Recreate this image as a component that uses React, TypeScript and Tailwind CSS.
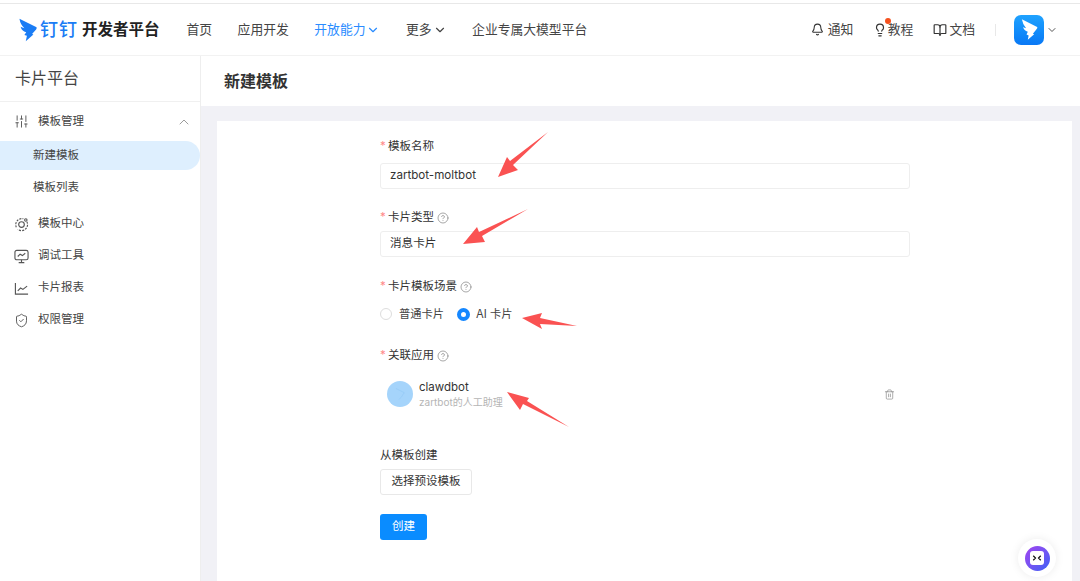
import { Bell, ChevronDown, ChevronUp, CircleHelp, Lightbulb, BookOpen, SlidersVertical, ShieldCheck, Trash2 } from 'lucide-react';

const FONT = 'font-["Inter","Noto_Sans_CJK_SC",sans-serif]';

function DingLogo({ className }: { className?: string }) {
  return (
    <svg viewBox="0 0 20 26" className={className} fill="#1a7cf5">
      <path d="M0.5 0.5 L19.5 10 Q20 11 19 12.5 L14.5 17.5 L16 18 L7.5 25.5 L8.8 19.5 L6 18.5 L8 15.5 Q3 14.5 1.8 9.5 Q3.5 10.5 6 11 Q1.5 7 0.5 0.5 Z" />
    </svg>
  );
}

function Label({ text, help, required = true }: { text: string; help?: boolean; required?: boolean }) {
  return (
    <div className="flex h-[20px] items-center text-[11.5px] text-[#333]">
      {required && <span className="w-[8px] text-[#ff8a8a]">*</span>}
      <span>{text}</span>
      {help && <CircleHelp className="ml-[3px] h-[12px] w-[12px] text-[#8a8a8a]" strokeWidth={1.5} />}
    </div>
  );
}

function NavIcon({ children, label }: { children: React.ReactNode; label: string }) {
  return (
    <div className="flex h-[32px] items-center pl-[14px] text-[11.5px] text-[#444]">
      <span className="flex w-[24px] text-[#555]">{children}</span>
      {label}
    </div>
  );
}

export default function App() {
  return (
    <div className={`relative h-[581px] w-[1080px] overflow-hidden bg-white ${FONT}`}>
      <div className="h-[4px] border-b border-[#e8e8e8]" />

      {/* top bar */}
      <header className="flex h-[52px] items-center border-b border-[#f2f2f2] pl-[19px] pr-[22px]">
        <DingLogo className="h-[26px] w-[18px]" />
        <span className="ml-[3px] text-[18px] font-medium leading-none tracking-[1px] text-[#1a7cf5]">钉钉</span>
        <span className="ml-[4px] text-[15.5px] font-bold text-[#222]">开发者平台</span>
        <nav className="ml-[27px] flex items-center gap-[25.5px] text-[12.8px] text-[#444]">
          <span>首页</span>
          <span>应用开发</span>
          <span className="flex items-center text-[#2a8cff]">
            开放能力<ChevronDown className="ml-[1px] h-[14px] w-[14px]" />
          </span>
          <span className="flex items-center">
            更多<ChevronDown className="ml-[1px] h-[14px] w-[14px]" />
          </span>
          <span>企业专属大模型平台</span>
        </nav>
        <div className="ml-auto flex items-center text-[12.8px] text-[#444]">
          <span className="flex items-center gap-[4px]">
            <Bell className="h-[13px] w-[13px] text-[#333]" />通知
          </span>
          <span className="relative ml-[19.5px] flex items-center gap-[1px]">
            <Lightbulb className="h-[14px] w-[14px] text-[#333]" />教程
            <span className="absolute left-[12px] top-[-2px] h-[6px] w-[6px] rounded-full bg-[#f5511e]" />
          </span>
          <span className="ml-[20px] flex items-center gap-[2px]">
            <BookOpen className="h-[14px] w-[14px] text-[#333]" />文档
          </span>
          <span className="ml-[20px] h-[12px] w-px bg-[#e8e8e8]" />
          <span className="ml-[18px] flex h-[30px] w-[30px] items-center justify-center rounded-[7px] bg-gradient-to-b from-[#1fa2ff] to-[#0a78f5]">
            <svg viewBox="0 0 20 26" className="h-[23px] w-[17px]" fill="#fff">
              <path d="M1 1 L19 10 Q20 11 18 13 L14 18 L15.5 18.5 L8 25 L9 20 L6.5 19 L8 15.5 Q3.5 14.5 2.5 10 Q4 11 6 11.5 Q2 7 1 1 Z" />
            </svg>
          </span>
          <ChevronDown className="ml-[2px] h-[12px] w-[12px] text-[#555]" />
        </div>
      </header>

      <div className="flex h-[525px]">
        {/* sidebar */}
        <aside className="w-[201px] shrink-0 border-r border-[#eeeeee]">
          <div className="flex h-[46px] items-center border-b border-[#f0f0f0] pb-[1px] pl-[15px] text-[16px] text-[#444]">卡片平台</div>
          <div className="flex h-[39px] items-center pl-[14px] pr-[8px] text-[11.5px] text-[#444]">
            <SlidersVertical className="mr-[9px] h-[15px] w-[15px] text-[#555]" strokeWidth={1.5} />
            模板管理
            <ChevronUp className="ml-auto h-[16px] w-[16px] text-[#888]" strokeWidth={1.25} />
          </div>
          <div className="flex h-[29px] items-center rounded-r-[15px] bg-[#deeffe] pl-[33px] text-[11.5px] text-[#444]">新建模板</div>
          <div className="flex h-[36px] items-center pl-[33px] text-[11.5px] text-[#444]">模板列表</div>
          <div className="mt-[2px]">
            <NavIcon label="模板中心">
              <svg viewBox="0 0 16 16" className="h-[15px] w-[15px]" fill="none" stroke="currentColor" strokeWidth="1.2">
                <circle cx="8" cy="8" r="3" />
                <path d="M2.5 11 A6.5 6.5 0 0 1 10 1.9" strokeDasharray="2.2 1.2" />
                <path d="M13.7 5 A6.5 6.5 0 0 1 4 13.2" strokeDasharray="2.2 1.2" />
                <circle cx="12.6" cy="3.2" r="1.3" />
              </svg>
            </NavIcon>
            <NavIcon label="调试工具">
              <svg viewBox="0 0 16 16" className="h-[15px] w-[15px]" fill="none" stroke="currentColor" strokeWidth="1.2">
                <rect x="1" y="1.5" width="14" height="10" rx="2" />
                <path d="M4 8 L6.5 5.5 L9 7 L12 4.5" />
                <path d="M8 11.5 V14.5 M5 14.5 H11" />
              </svg>
            </NavIcon>
            <NavIcon label="卡片报表">
              <svg viewBox="0 0 16 16" className="h-[15px] w-[15px]" fill="none" stroke="currentColor" strokeWidth="1.2">
                <path d="M1.5 2 V14 H15" />
                <path d="M4 10.5 L7 7.5 L9.5 9 L14 5.5" />
              </svg>
            </NavIcon>
            <NavIcon label="权限管理"><ShieldCheck className="h-[15px] w-[15px]" strokeWidth={1.5} /></NavIcon>
          </div>
        </aside>

        {/* main */}
        <main className="flex min-w-0 flex-1 flex-col bg-[#f1f1f6]">
          <div className="flex h-[50px] shrink-0 items-center bg-white pl-[23px] text-[16px] font-bold text-[#333]">新建模板</div>
          <div className="ml-[16px] mr-[8px] mt-[15px] flex-1 bg-white pl-[163px] pt-[16px]">
            <div className="w-[530px]">
              <Label text="模板名称" />
              <div className="mt-[6px] flex h-[26px] items-center rounded-[3px] border border-[#eeeeee] pl-[9px] text-[11.6px] text-[#333]">zartbot-moltbot</div>
              <div className="mt-[19px]"><Label text="卡片类型" help /></div>
              <div className="mt-[3px] flex h-[26px] items-center rounded-[3px] border border-[#eeeeee] pl-[9px] text-[11.6px] text-[#333]">消息卡片</div>
              <div className="mt-[20px]"><Label text="卡片模板场景" help /></div>
              <div className="mt-[7px] flex h-[20px] items-center text-[11.25px] text-[#444]">
                <span className="h-[12px] w-[12px] rounded-full border border-[#dddddd]" />
                <span className="ml-[7px]">普通卡片</span>
                <span className="ml-[13px] h-[13px] w-[13px] rounded-full border-[4px] border-[#1587ff] bg-white" />
                <span className="ml-[6px]">AI 卡片</span>
              </div>
              <div className="mt-[22px]"><Label text="关联应用" help /></div>
              <div className="mt-[5px] flex h-[46px] items-center pl-[7px] pr-[15px]">
                <span className="flex h-[26px] w-[26px] items-center justify-center rounded-full bg-[#a5d4fb]">
                  <svg viewBox="0 0 20 26" className="h-[12px] w-[10px]" fill="none" stroke="#8cc4f5">
                    <path d="M1 1 L19 10 L14 18 L8 25" />
                  </svg>
                </span>
                <div className="ml-[6px]">
                  <div className="text-[11.5px] leading-[16px] text-[#333]">clawdbot</div>
                  <div className="text-[10px] leading-[14px] text-[#b5b5b5]">zartbot的人工助理</div>
                </div>
                <Trash2 className="ml-auto h-[11px] w-[11px] text-[#888]" strokeWidth={1.5} />
              </div>
              <div className="mt-[29px]"><Label text="从模板创建" required={false} /></div>
              <div className="mt-[3px] flex h-[26px] w-[92px] items-center justify-center rounded-[3px] border border-[#e8e8e8] text-[11.5px] text-[#333]">选择预设模板</div>
              <div className="mt-[19px] flex h-[26px] w-[47px] items-center justify-center rounded-[3px] bg-[#0a8cff] text-[11.5px] text-white">创建</div>
            </div>
          </div>
        </main>
      </div>

      {/* floating assistant */}
      <div className="absolute left-[1018px] top-[539px] flex h-[38px] w-[38px] items-center justify-center rounded-full bg-white shadow-[0_0_10px_rgba(0,0,0,0.08)]">
        <span className="flex h-[25px] w-[25px] items-center justify-center rounded-full bg-gradient-to-br from-[#a040f0] to-[#3060f5]">
          <span className="flex h-[14px] w-[14px] items-center justify-center rounded-[3px] bg-white">
            <svg viewBox="0 0 12 8" className="h-[6px] w-[10px]" fill="none" stroke="#111" strokeWidth="1.6">
              <path d="M1 1 L4 4 L1 7 M11 1 L8 4 L11 7" />
            </svg>
          </span>
        </span>
      </div>

      {/* annotation arrows */}
      <svg className="absolute left-0 top-0 h-[581px] w-[1080px]" viewBox="0 0 1080 581" fill="#fa5252">
        <path d="M548 132 L513 165 L518 170 L498 177 L507 157 L510 161 Z" />
        <path d="M528 209 L482 236 L485 242 L463 244 L477 227 L479 232 Z" />
        <path d="M577 326 L540 324 L542 329 L522 318 L542 313 L540 318 Z" />
        <path d="M569 427 L523 404 L520 410 L507 392 L529 398 L527 401 Z" />
      </svg>
    </div>
  );
}
